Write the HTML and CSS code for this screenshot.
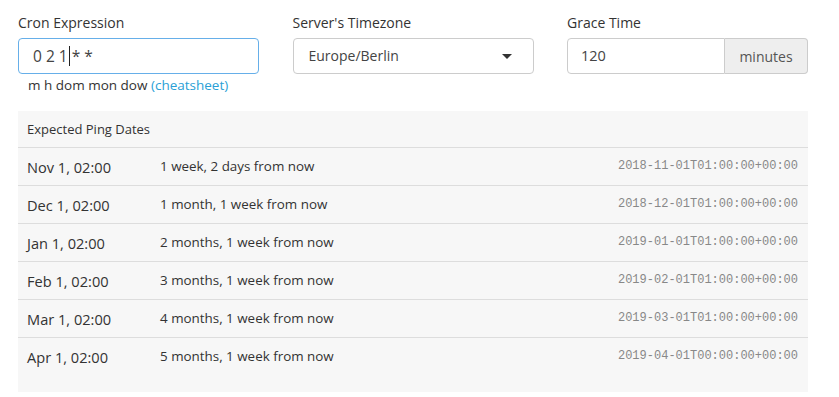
FILE: index.html
```html
<html><head>
    <title>Cron Expression</title>
    <link rel="stylesheet" href="styles.css">
</head>
<body>
    <div class="fields">
        <div class="field">
            <label class="field-label">Cron Expression</label>
            <div class="control control-focus">0 2 1<span class="caret-line"></span>* *</div>
            <div class="hint">m h dom mon dow <a href="#">(cheatsheet)</a></div>
        </div>
        <div class="field">
            <label class="field-label">Server's Timezone</label>
            <div class="control select">Europe/Berlin<span class="select-arrow"></span></div>
        </div>
        <div class="field">
            <label class="field-label">Grace Time</label>
            <div class="input-group">
                <div class="control grace-input">120</div>
                <div class="addon">minutes</div>
            </div>
        </div>
    </div>

    <div class="panel">
        <div class="panel-head">Expected Ping Dates</div>
        <div class="ping-row"><span class="ping-date">Nov 1, 02:00</span><span class="ping-rel">1 week, 2 days from now</span><span class="ping-iso">2018-11-01T01:00:00+00:00</span></div>
        <div class="ping-row"><span class="ping-date">Dec 1, 02:00</span><span class="ping-rel">1 month, 1 week from now</span><span class="ping-iso">2018-12-01T01:00:00+00:00</span></div>
        <div class="ping-row"><span class="ping-date">Jan 1, 02:00</span><span class="ping-rel">2 months, 1 week from now</span><span class="ping-iso">2019-01-01T01:00:00+00:00</span></div>
        <div class="ping-row"><span class="ping-date">Feb 1, 02:00</span><span class="ping-rel">3 months, 1 week from now</span><span class="ping-iso">2019-02-01T01:00:00+00:00</span></div>
        <div class="ping-row"><span class="ping-date">Mar 1, 02:00</span><span class="ping-rel">4 months, 1 week from now</span><span class="ping-iso">2019-03-01T01:00:00+00:00</span></div>
        <div class="ping-row"><span class="ping-date">Apr 1, 02:00</span><span class="ping-rel">5 months, 1 week from now</span><span class="ping-iso">2019-04-01T00:00:00+00:00</span></div>
    </div>
</body></html>
```

FILE: styles.css
```css
body {margin: 0; padding: 13px 31px 0 18px; background: #fff; color: #333; font-family: "Open Sans", "Noto Sans", sans-serif; font-size: 14px;}

.fields {display: grid; grid-template-columns: 241px 241px 241px; column-gap: 33.5px;}
.field-label {display: block; line-height: 20px; margin-bottom: 5px;}
.control {height: 36px; box-sizing: border-box; border: 1px solid #ccc; border-radius: 4px; background: #fff; padding: 0 13px; line-height: 34px; font-size: 14px; color: #444; display: flex; align-items: center;}
.control-focus {border-color: #66afe9; white-space: pre; font-size: 15.5px; padding-left: 14px;}
.caret-line {display: inline-block; width: 1px; height: 20px; background: #222; margin: 0 2px 0 1px;}
.hint {font-size: 13.5px; line-height: 18px; margin-top: 2px; padding-left: 10px;}
.hint a {color: #2a9fd6; text-decoration: none;}

.select {padding-left: 15px; position: relative;}
.select-arrow {position: absolute; right: 21px; top: 15px; border-left: 5px solid transparent; border-right: 5px solid transparent; border-top: 5px solid #333;}

.input-group {display: flex;}
.grace-input {flex: 1; border-radius: 4px 0 0 4px; font-size: 14.5px;}
.addon {width: 83px; height: 36px; box-sizing: border-box; border: 1px solid #ccc; border-left: none; border-radius: 0 4px 4px 0; background: #eee; display: flex; align-items: center; justify-content: center; font-size: 14px; color: #555;}

.panel {margin-top: 17px; width: 790px; background: #f7f7f7; padding-bottom: 17px;}
.panel-head {height: 36px; line-height: 36px; padding-left: 9px; font-size: 13px; border-bottom: 1px solid #ddd;}
.ping-row {display: flex; align-items: center; height: 37px; padding: 0 10px 0 9px; border-bottom: 1px solid #ddd;}
.ping-row:last-child {border-bottom: none;}
.ping-date {width: 133px; font-size: 14.6px;}
.ping-rel {flex: 1; font-size: 13.4px; margin-top: -2px;}
.ping-iso {font-family: "Liberation Mono", "DejaVu Sans Mono", monospace; font-size: 12px; color: #888; margin-top: -2px;}
```
